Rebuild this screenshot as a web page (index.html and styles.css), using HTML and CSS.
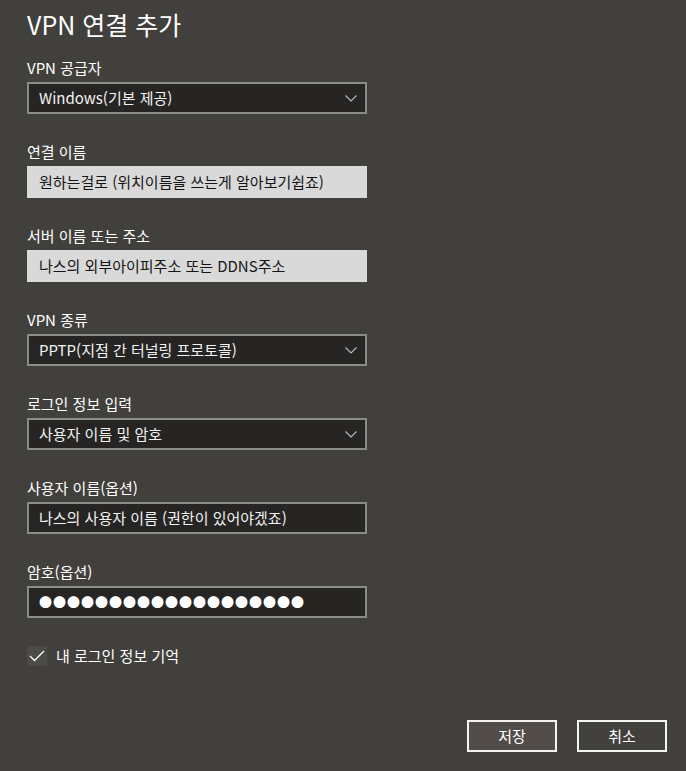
FILE: index.html
```html
<!DOCTYPE html>
<html lang="ko">
<head>
<meta charset="utf-8">
<title>VPN 연결 추가</title>
<link rel="stylesheet" href="styles.css">
</head>
<body>
<main class="dialog">
  <h1 class="title">VPN 연결 추가</h1>

  <div class="field">
    <div class="label">VPN 공급자</div>
    <div class="control select">
      <span class="value">Windows(기본 제공)</span>
      <svg class="chev" width="12" height="7" viewBox="0 0 12 7"><path d="M0.5 0.5 L6 6 L11.5 0.5" fill="none" stroke="#bdbdbd" stroke-width="1.1"/></svg>
    </div>
  </div>

  <div class="field">
    <div class="label">연결 이름</div>
    <div class="control light"><span class="value">원하는걸로 (위치이름을 쓰는게 알아보기쉽죠)</span></div>
  </div>

  <div class="field">
    <div class="label">서버 이름 또는 주소</div>
    <div class="control light"><span class="value">나스의 외부아이피주소 또는 DDNS주소</span></div>
  </div>

  <div class="field">
    <div class="label">VPN 종류</div>
    <div class="control select">
      <span class="value">PPTP(지점 간 터널링 프로토콜)</span>
      <svg class="chev" width="12" height="7" viewBox="0 0 12 7"><path d="M0.5 0.5 L6 6 L11.5 0.5" fill="none" stroke="#bdbdbd" stroke-width="1.1"/></svg>
    </div>
  </div>

  <div class="field">
    <div class="label">로그인 정보 입력</div>
    <div class="control select">
      <span class="value">사용자 이름 및 암호</span>
      <svg class="chev" width="12" height="7" viewBox="0 0 12 7"><path d="M0.5 0.5 L6 6 L11.5 0.5" fill="none" stroke="#bdbdbd" stroke-width="1.1"/></svg>
    </div>
  </div>

  <div class="field">
    <div class="label">사용자 이름(옵션)</div>
    <div class="control dark"><span class="value">나스의 사용자 이름 (권한이 있어야겠죠)</span></div>
  </div>

  <div class="field">
    <div class="label">암호(옵션)</div>
    <div class="control dark"><span class="value dots">●●●●●●●●●●●●●●●●●●●</span></div>
  </div>

  <div class="check">
    <span class="box"><svg width="16" height="12" viewBox="0 0 16 12"><path d="M1 6 L5.5 10.5 L15 1" fill="none" stroke="#ffffff" stroke-width="1.3"/></svg></span>
    <span class="check-text">내 로그인 정보 기억</span>
  </div>

  <div class="actions">
    <button class="btn primary" type="button">저장</button>
    <button class="btn" type="button">취소</button>
  </div>
</main>
</body>
</html>
```

FILE: styles.css
```css
html, body {
  margin: 0;
  padding: 0;
  background: #42403c;
}
body {
  width: 686px;
  height: 771px;
  overflow: hidden;
  font-family: "Noto Sans CJK KR", "Noto Sans", sans-serif;
  color: #ffffff;
}
.dialog {
  padding: 6px 19px 0 27px;
}
.title {
  margin: 0 0 16px 0;
  font-size: 25px;
  font-weight: 400;
  line-height: 36px;
  color: #ffffff;
}
.field {
  width: 340px;
  margin-bottom: 28px;
}
.label {
  font-size: 15px;
  line-height: 20px;
  height: 20px;
  margin-bottom: 4px;
  color: #ffffff;
}
.control {
  box-sizing: border-box;
  height: 32px;
  display: flex;
  align-items: center;
  justify-content: space-between;
  padding: 0 8px 0 10px;
  font-size: 15px;
  border: 2px solid transparent;
}
.value {
  line-height: 20px;
  white-space: nowrap;
}
.select, .dark {
  background: #262523;
  border-color: #8a8a88;
  color: #f2f2f2;
}
.light {
  background: #d9d9d9;
  border-color: #d9d9d9;
  color: #151515;
}
.dots {
  font-size: 13px;
  letter-spacing: 1px;
  color: #ffffff;
}
.chev {
  display: block;
  margin-top: 1px;
}
.check {
  display: flex;
  align-items: center;
  margin-top: 6px;
  height: 20px;
}
.box {
  width: 20px;
  height: 20px;
  background: #4d4b47;
  display: flex;
  align-items: center;
  justify-content: center;
  margin-right: 9px;
}
.check-text {
  font-size: 15px;
  line-height: 20px;
}
.actions {
  display: flex;
  justify-content: flex-end;
  gap: 20px;
  margin-top: 54px;
}
.btn {
  box-sizing: border-box;
  width: 90px;
  height: 32px;
  border: 2px solid #f4f4f4;
  background: #42403c;
  color: #ffffff;
  font-family: "Noto Sans CJK KR", "Noto Sans", sans-serif;
  font-size: 15px;
  padding: 0;
  line-height: 20px;
}
.btn.primary {
  background: #524d49;
}
```
